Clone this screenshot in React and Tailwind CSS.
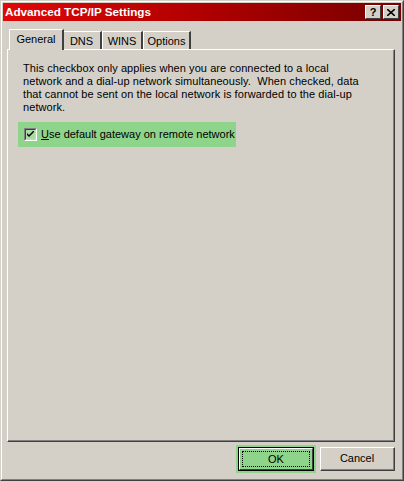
import React from "react";

const font = { fontFamily: '"Liberation Sans", Arial, sans-serif' };

function Tab({ label, selected, w }) {
  if (selected) {
    return (
      <div
        className={`relative z-10 h-[21px] -mb-[1px] -mr-[2px] -ml-[2px] flex items-center justify-center border-t border-l border-white border-r-2 border-r-[#404040] bg-[#d4d0c8] text-[11px] text-black ${w}`}
      >
        <span className="-mt-[2px]">{label}</span>
      </div>
    );
  }
  return (
    <div
      className={`h-[18px] mt-[2px] flex items-center justify-center border-t border-l border-white border-r-2 border-r-[#404040] text-[11px] text-black ${w}`}
    >
      <span className="mt-[1px]">{label}</span>
    </div>
  );
}

function TitleButton({ children }) {
  return (
    <div className="w-[16px] h-[14px] bg-[#d4d0c8] border-t border-l border-white border-r border-b border-r-[#404040] border-b-[#404040] flex items-center justify-center text-black font-bold text-[11px] leading-none">
      {children}
    </div>
  );
}

export default function App() {
  return (
    <div
      style={font}
      className="w-[404px] h-[481px] bg-[#d4d0c8] border-t border-l border-[#d4d0c8] border-r border-b border-r-[#404040] border-b-[#404040] overflow-hidden"
    >
      <div className="w-full h-full border-t border-l border-white border-r border-b border-r-[#808080] border-b-[#808080] p-[1px] flex flex-col">
        {/* Title bar */}
        <div className="h-[18px] flex items-center justify-between pl-[2px] pr-[2px] bg-gradient-to-r from-[#e00808] via-[#b00000] to-[#780000]">
          <span className="text-white font-bold text-[11.7px] leading-none">
            Advanced TCP/IP Settings
          </span>
          <div className="flex gap-[2px]">
            <TitleButton>?</TitleButton>
            <TitleButton>
              <svg width="8" height="7" viewBox="0 0 8 7">
                <path d="M0 0 L8 7 M8 0 L0 7" stroke="black" strokeWidth="1.6" />
              </svg>
            </TitleButton>
          </div>
        </div>

        {/* Body */}
        <div className="flex-1 flex flex-col px-[4px] pt-[8px]">
          {/* Tabs row */}
          <div className="flex pl-[4px] h-[20px] items-end">
            <Tab label="General" selected w="w-[55px]" />
            <Tab label="DNS" w="w-[40px]" />
            <Tab label="WINS" w="w-[41px]" />
            <Tab label="Options" w="w-[48px]" />
          </div>
          {/* Panel */}
          <div className="w-[388px] h-[393px] border-t border-l border-white border-r border-b border-r-[#404040] border-b-[#404040]">
            <div className="w-full h-full border-r border-b border-r-[#808080] border-b-[#808080] pl-[15px] pt-[12px] pr-[8px] flex flex-col">
              <p className="text-[11px] leading-[13px] text-black w-[338px] tracking-[0.07px]">
                This checkbox only applies when you are connected to a local network and a dial-up network simultaneously.&nbsp; When checked, data that cannot be sent on the local network is forwarded to the dial-up network.
              </p>
              <div className="mt-[8px] -ml-[5px] w-[218px] h-[25px] bg-[#8ed48a] flex items-center pl-[6px] gap-[4px]">
                <div className="w-[13px] h-[13px] border-t border-l border-[#808080] border-r border-b border-r-white border-b-white">
                  <div className="w-full h-full border-t border-l border-[#404040] border-r border-b border-r-[#d4d0c8] border-b-[#d4d0c8] bg-[#a8dca4] flex items-center justify-center">
                    <svg width="7" height="7" viewBox="0 0 7 7">
                      <path d="M0 2 L0 4 L2 6 L7 1 L7 -1 L2 4 Z" fill="black" />
                    </svg>
                  </div>
                </div>
                <span className="text-[11px] text-black leading-none">
                  <span className="underline">U</span>se default gateway on remote network
                </span>
              </div>
            </div>
          </div>
          {/* Buttons */}
          <div className="flex justify-end gap-[4px] mt-[3px] pr-[2px]">
            <div className="p-[2px] bg-[#8ed48a]">
              <div className="w-[76px] h-[24px] border border-black">
                <div className="w-full h-full border-t border-l border-white border-r border-b border-r-[#404040] border-b-[#404040] bg-[#8ed48a] p-[2px]">
                  <div className="w-full h-full border border-dotted border-black flex items-center justify-center text-[11px] text-black">
                    OK
                  </div>
                </div>
              </div>
            </div>
            <div className="mt-[2px] w-[75px] h-[24px] border-t border-l border-white border-r border-b border-r-[#404040] border-b-[#404040]">
              <div className="w-full h-full border-r border-b border-r-[#808080] border-b-[#808080] flex items-center justify-center text-[11px] text-black">
                Cancel
              </div>
            </div>
          </div>
        </div>
      </div>
    </div>
  );
}
